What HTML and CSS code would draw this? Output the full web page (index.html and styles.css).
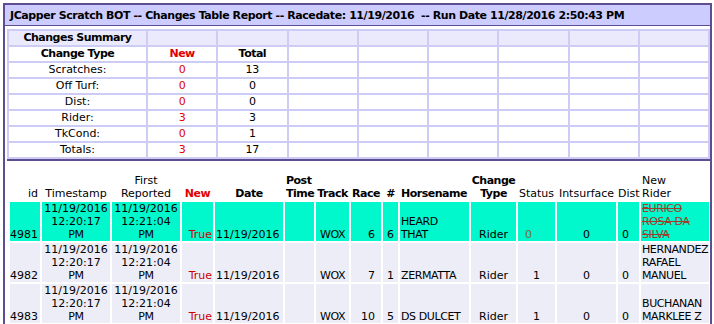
FILE: index.html
```html
<!DOCTYPE html>
<html>
<head>
<meta charset="utf-8">
<link rel="stylesheet" href="styles.css">
</head>
<body>
<div class="frame">
  <div class="title">JCapper Scratch BOT -- Changes Table Report -- Racedate: 11/19/2016 &nbsp;-- Run Date 11/28/2016 2:50:43 PM</div>
  <div class="summary-wrap">
    <table class="summary">
      <tr class="sum-head"><td class="b first">Changes Summary</td><td></td><td></td><td></td><td></td><td></td><td></td><td></td><td></td></tr>
      <tr><td class="b">Change Type</td><td class="b red">New</td><td class="b">Total</td><td></td><td></td><td></td><td></td><td></td><td></td></tr>
      <tr><td>Scratches:</td><td class="red">0</td><td>13</td><td></td><td></td><td></td><td></td><td></td><td></td></tr>
      <tr><td>Off Turf:</td><td class="red">0</td><td>0</td><td></td><td></td><td></td><td></td><td></td><td></td></tr>
      <tr><td>Dist:</td><td class="red">0</td><td>0</td><td></td><td></td><td></td><td></td><td></td><td></td></tr>
      <tr><td>Rider:</td><td class="red">3</td><td>3</td><td></td><td></td><td></td><td></td><td></td><td></td></tr>
      <tr><td>TkCond:</td><td class="red">0</td><td>1</td><td></td><td></td><td></td><td></td><td></td><td></td></tr>
      <tr><td>Totals:</td><td class="red">3</td><td>17</td><td></td><td></td><td></td><td></td><td></td><td></td></tr>
    </table>
  </div>
  <div class="detail-wrap">
    <table class="detail">
      <colgroup>
        <col class="c-id"><col class="c-ts"><col class="c-fr"><col class="c-new"><col class="c-date"><col class="c-post"><col class="c-track"><col class="c-race"><col class="c-num"><col class="c-horse"><col class="c-type"><col class="c-status"><col class="c-int"><col class="c-dist"><col class="c-rider">
      </colgroup>
      <tr class="head">
        <td class="r">id</td>
        <td class="c">Timestamp</td>
        <td class="c">First<br>Reported</td>
        <td class="c b red">New</td>
        <td class="c b">Date</td>
        <td class="l b">Post<br>Time</td>
        <td class="c b">Track</td>
        <td class="c b">Race</td>
        <td class="c b">#</td>
        <td class="l b">Horsename</td>
        <td class="c b">Change<br>Type</td>
        <td class="c">Status</td>
        <td class="c">Intsurface</td>
        <td class="c">Dist</td>
        <td class="l">New<br>Rider</td>
      </tr>
      <tr class="row hl">
        <td class="r">4981</td>
        <td class="c">11/19/2016<br>12:20:17<br><span class="up">PM</span></td>
        <td class="c">11/19/2016<br>12:21:04<br><span class="up">PM</span></td>
        <td class="r true">True</td>
        <td class="l">11/19/2016</td>
        <td></td>
        <td class="c up">WOX</td>
        <td class="rr">6</td>
        <td class="rn">6</td>
        <td class="l up">HEARD<br>THAT</td>
        <td class="c">Rider</td>
        <td class="c st0">0</td>
        <td class="c">0</td>
        <td class="dist">0</td>
        <td class="l up strike">EURICO<br>ROSA DA<br>SILVA</td>
      </tr>
      <tr class="row">
        <td class="r">4982</td>
        <td class="c">11/19/2016<br>12:20:17<br><span class="up">PM</span></td>
        <td class="c">11/19/2016<br>12:21:04<br><span class="up">PM</span></td>
        <td class="r true">True</td>
        <td class="l">11/19/2016</td>
        <td></td>
        <td class="c up">WOX</td>
        <td class="rr">7</td>
        <td class="rn">1</td>
        <td class="l up">ZERMATTA</td>
        <td class="c">Rider</td>
        <td class="c">1</td>
        <td class="c">0</td>
        <td class="dist">0</td>
        <td class="l up">HERNANDEZ<br>RAFAEL<br>MANUEL</td>
      </tr>
      <tr class="row">
        <td class="r">4983</td>
        <td class="c">11/19/2016<br>12:20:17<br><span class="up">PM</span></td>
        <td class="c">11/19/2016<br>12:21:04<br><span class="up">PM</span></td>
        <td class="r true">True</td>
        <td class="l">11/19/2016</td>
        <td></td>
        <td class="c up">WOX</td>
        <td class="rr">10</td>
        <td class="rn">5</td>
        <td class="l up">DS DULCET</td>
        <td class="c">Rider</td>
        <td class="c">1</td>
        <td class="c">0</td>
        <td class="dist">0</td>
        <td class="l up">BUCHANAN<br>MARKLEE Z</td>
      </tr>
      <tr class="row">
        <td></td><td></td><td></td><td></td><td></td><td></td><td></td><td></td><td></td><td></td><td></td><td></td><td></td><td></td><td></td>
      </tr>
    </table>
  </div>
</div>
</body>
</html>
```

FILE: styles.css
```css
html, body {
  margin: 0;
  padding: 0;
  background: #ffffff;
}
body {
  font-family: "DejaVu Sans", Verdana, sans-serif;
  font-size: 11px;
  color: #000000;
}
.frame {
  margin: 3px 0 0 3px;
  width: 705px;
  border: 2px solid #5e4d91;
  border-bottom: none;
  height: 400px;
}
.title {
  background: #ccccff;
  border-bottom: 1px solid #5e4d91;
  height: 20px;
  line-height: 21px;
  padding-left: 5px;
  font-weight: bold;
  letter-spacing: -0.42px;
  white-space: nowrap;
}
.summary-wrap {
  margin: 3px 0 0 2px;
  border-bottom: 2px solid #5e4d91;
  width: 703px;
}
.summary {
  width: 703px;
  border-collapse: separate;
  border-spacing: 2px;
  background: #ccccf5;
  table-layout: fixed;
}
.summary td {
  background: #ffffff;
  height: 14px;
  padding: 0;
  line-height: 14px;
  text-align: center;
  white-space: nowrap;
}
.summary td:first-child {
  width: 137px;
}
.summary .sum-head td {
  background: #eaeafc;
}
.b {
  font-weight: bold;
  letter-spacing: -0.5px;
}
.red { color: #e00000; }
.detail-wrap {
  padding: 11px 0 0 3px;
}
.detail {
  border-collapse: separate;
  border-spacing: 2px;
  table-layout: fixed;
  width: 703px;
}
.detail td {
  padding: 0;
  line-height: 13px;
  vertical-align: bottom;
  white-space: nowrap;
}
.c-id { width: 30px; }
.c-ts { width: 68px; }
.c-fr { width: 68px; }
.c-new { width: 31px; }
.c-date { width: 68px; }
.c-post { width: 29px; }
.c-track { width: 33px; }
.c-race { width: 30px; }
.c-num { width: 15px; }
.c-horse { width: 69px; }
.c-type { width: 45px; }
.c-status { width: 37px; }
.c-int { width: 59px; }
.c-dist { width: 21px; }
.c-rider { width: 68px; }
.detail .row td {
  background: #ededf8;
  height: 39px;
}
.detail .row.hl td {
  background: #00f8cc;
}
.up { letter-spacing: -0.4px; }
.r { text-align: right; padding-right: 2px !important; }
.rr { text-align: right; padding-right: 6px !important; }
.rn { text-align: right; padding-right: 4px !important; }
.c { text-align: center; }
.l { text-align: left; padding-left: 1px !important; }
.dist { text-align: right; padding-right: 10px !important; }
.true { color: #c80000; padding-right: 1px !important; }
.st0 { color: #7a6a3a; padding-right: 16px !important; }
.strike {
  color: #a33a2a;
  text-decoration: line-through;
}
```
